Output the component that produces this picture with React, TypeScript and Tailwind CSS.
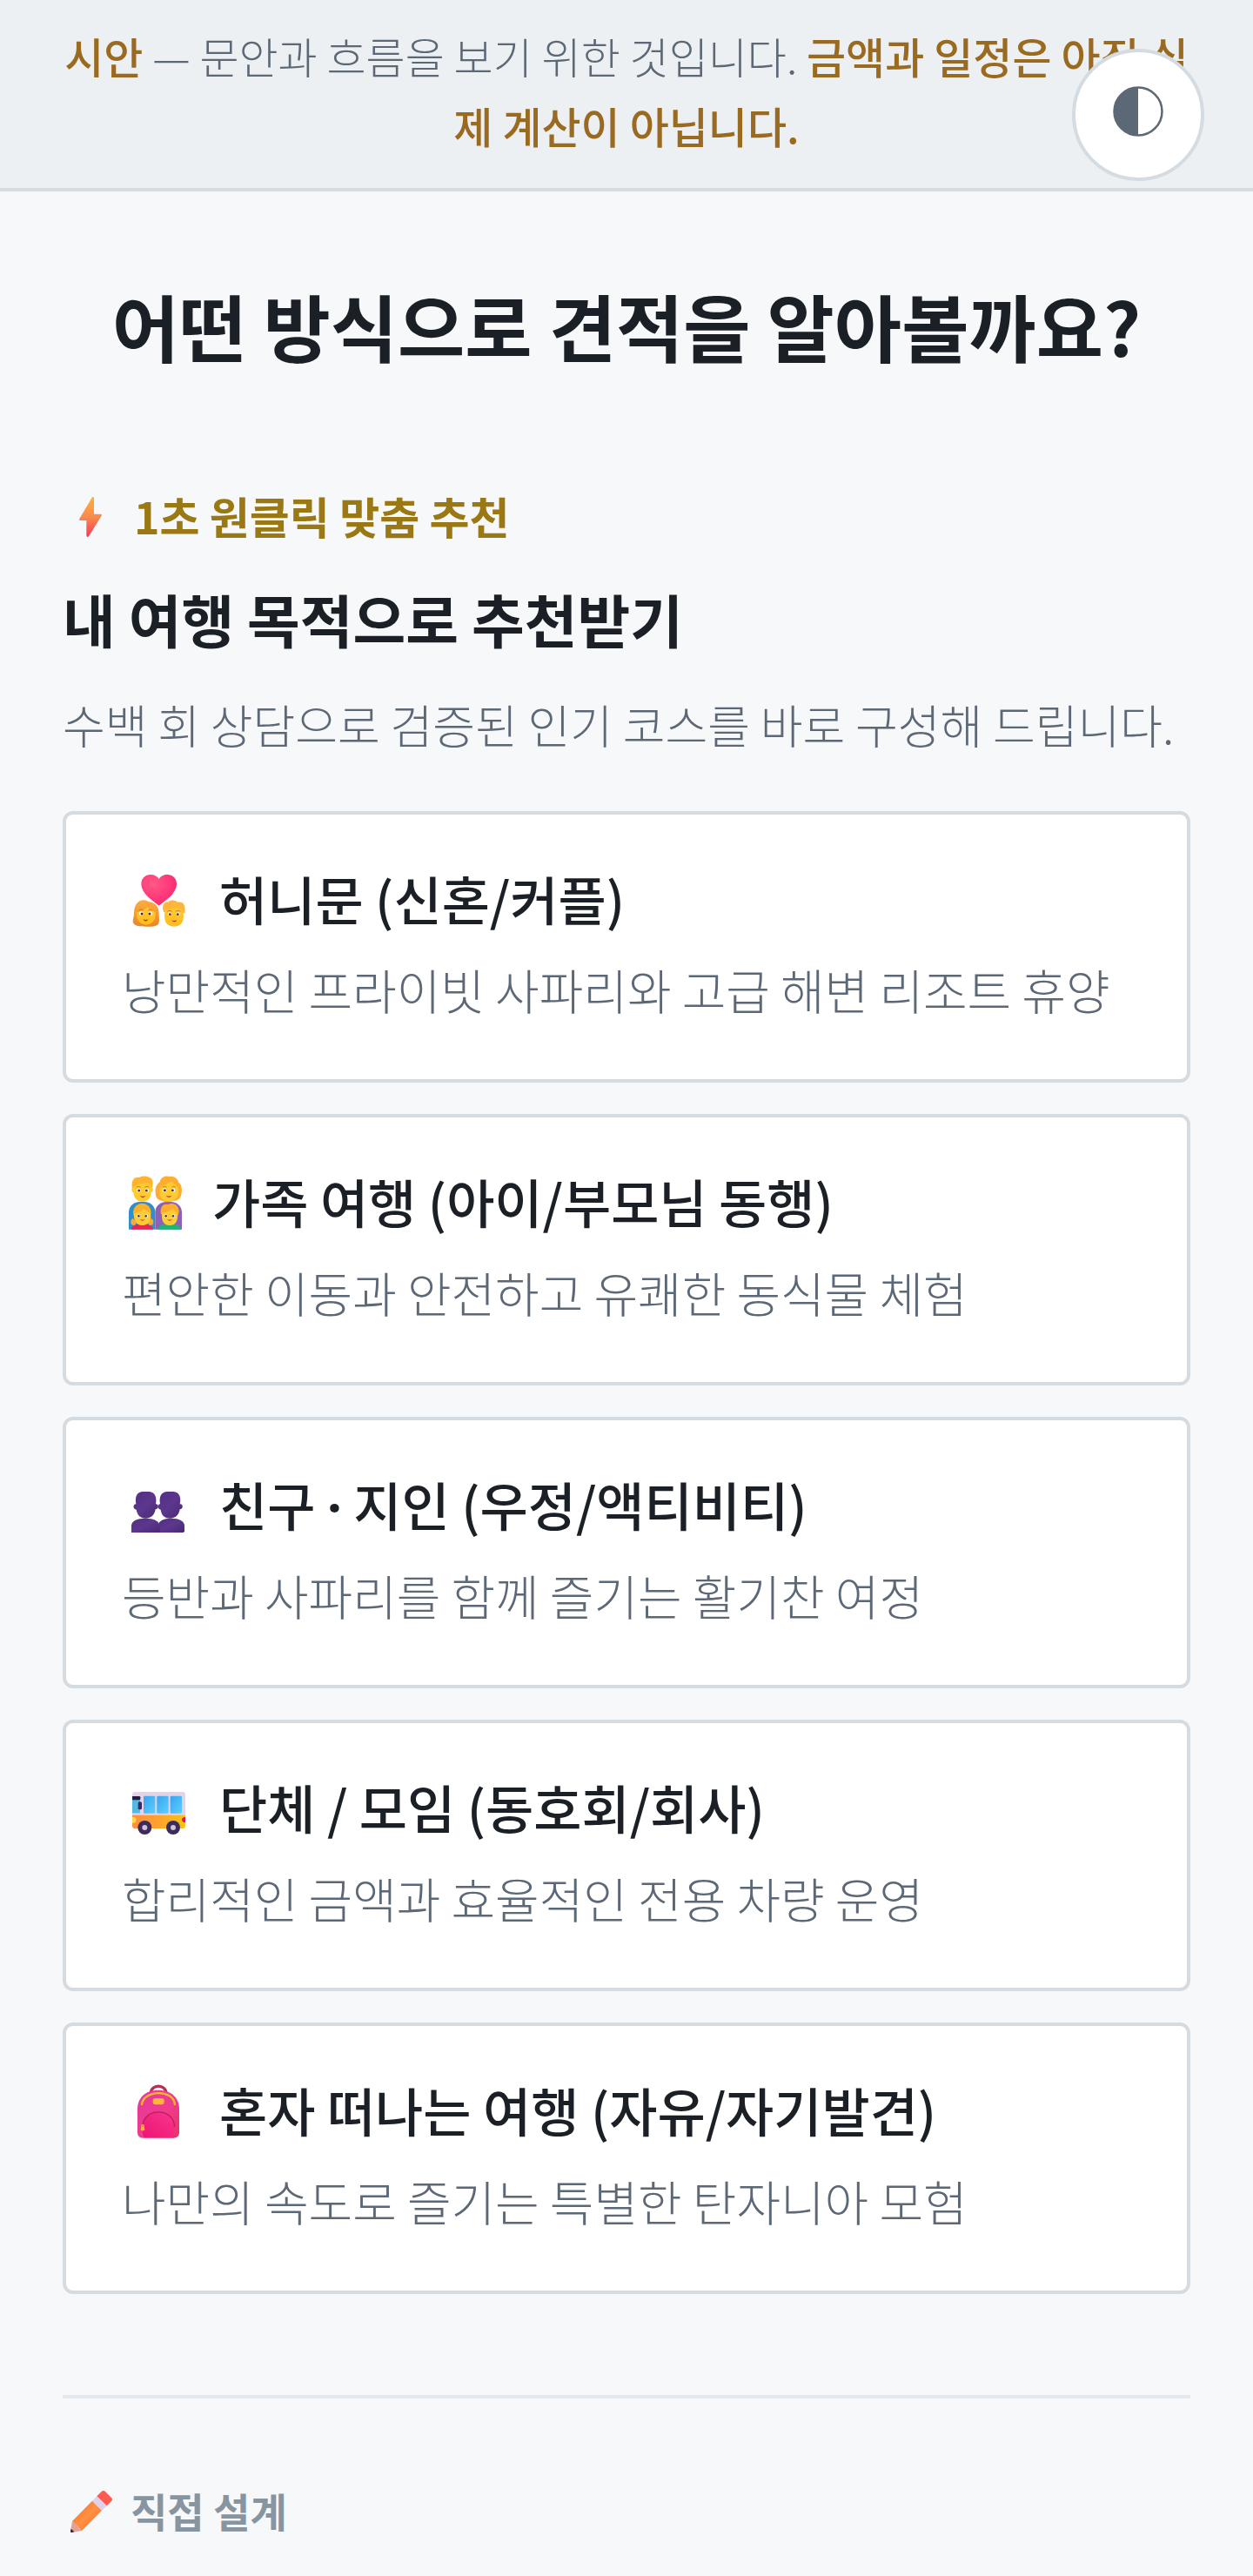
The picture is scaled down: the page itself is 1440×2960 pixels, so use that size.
import type { ReactNode } from "react";

function HoneymoonIcon() {
  return (
    <svg className="h-16 w-[84px] shrink-0" viewBox="30 66 252 192" aria-hidden="true">
      <defs>
        <radialGradient id="heart" cx="0.35" cy="0.3" r="0.8">
          <stop offset="0" stopColor="#ff5a84" />
          <stop offset="0.55" stopColor="#ff3a7c" />
          <stop offset="1" stopColor="#f52469" />
        </radialGradient>
        <linearGradient id="hairA" x1="0" y1="0" x2="0" y2="1">
          <stop offset="0" stopColor="#ffad3b" />
          <stop offset="1" stopColor="#e8862d" />
        </linearGradient>
        <linearGradient id="skin" x1="0" y1="0" x2="0" y2="1">
          <stop offset="0" stopColor="#ffc92f" />
          <stop offset="1" stopColor="#ffbb1c" />
        </linearGradient>
      </defs>
      <path d="M158 182C135 164 97 140 97 107C97 88 111 75 129 75C143 75 153 81 158 90C163 81 174 75 187 75C205 75 219 88 219 107C219 140 181 164 158 182Z" fill="url(#heart)" />
      <path d="M69 241C66 234 72 222 72 208C72 182 84 163 106 163C112 163 118 166 122 168C146 170 159 188 158 210C158 226 162 238 154 248C143 255 126 254 114 254C94 253 75 255 69 241Z" fill="url(#hairA)" />
      <path d="M80 205C96 204 110 196 118 187C125 196 138 199 146 205C148 232 135 248 114 248C93 248 80 231 80 205Z" fill="url(#skin)" />
      <path d="M174 204C166 178 177 169 190 169C199 160 216 164 223 170C240 166 252 179 247 208Z" fill="#ffb638" />
      <path d="M178 202C184 190 205 194 221 189C233 192 241 198 242 208C246 240 232 254 210 254C185 254 174 238 178 202Z" fill="url(#skin)" />
      <g fill="#fff">
        <circle cx="97" cy="209" r="7" />
        <circle cx="128" cy="209" r="7" />
        <circle cx="195" cy="211" r="6" />
        <circle cx="224" cy="211" r="6" />
      </g>
      <g fill="#4b2a32">
        <circle cx="99" cy="210" r="4.5" />
        <circle cx="126" cy="210" r="4.5" />
        <circle cx="196" cy="212" r="4" />
        <circle cx="223" cy="212" r="4" />
      </g>
      <g fill="none" stroke="#d9722b" strokeWidth="3" strokeLinecap="round">
        <path d="M90 197Q96 192 103 197M122 198Q129 193 135 198" />
        <path d="M188 201Q195 196 202 201M217 201Q224 196 231 201" />
      </g>
      <path d="M103 229Q112 233 121 229Q113 242 103 229ZM201 232Q211 236 220 231Q213 244 201 232Z" fill="#b5242d" />
    </svg>
  );
}

function FamilyIcon() {
  return (
    <svg className="h-16 w-[76px] shrink-0" viewBox="30 60 228 192" aria-hidden="true">
      <path d="M54 248V190C54 165 72 152 100 152C128 152 145 165 145 190V248Z" fill="#2f8fcd" />
      <path d="M145 248V190C145 165 163 152 191 152C219 152 237 165 237 190V248Z" fill="#8c62b8" />
      <path d="M66 108C60 78 75 65 90 69C103 62 121 64 131 72C140 80 137 100 133 112Z" fill="#ffb22d" />
      <path d="M70 102C80 91 101 90 113 86C124 88 131 92 132 103C140 104 138 119 131 120C130 142 119 152 101 152C82 152 72 141 70 121C63 119 62 105 70 102Z" fill="#ffca30" />
      <path d="M146 121C144 101 153 91 161 84C164 67 182 61 194 66C209 63 222 72 226 86C237 94 239 113 235 127C233 143 220 151 209 149C191 155 176 155 165 148C152 147 146 136 146 121Z" fill="#ffad30" />
      <path d="M159 111C168 94 186 91 202 83C212 92 223 97 225 112C226 137 213 151 192 151C171 151 158 137 159 111Z" fill="#ffcb33" />
      <path d="M62 248C63 236 79 228 101 228C122 228 138 237 138 248Z" fill="#e9274c" />
      <path d="M153 248C155 236 171 228 195 228C219 228 233 238 235 248Z" fill="#20b574" />
      <path d="M68 210Q56 218 64 232Q78 239 80 223ZM132 210Q144 218 136 232Q122 239 120 223Z" fill="#ffa834" />
      <circle cx="100" cy="189" r="31" fill="#ffb02b" />
      <path d="M72 192C85 191 98 184 106 177C113 184 122 187 129 193C134 219 120 234 101 234C81 234 69 217 72 192Z" fill="#ffcc36" />
      <path d="M165 196C160 169 174 157 189 162C203 154 222 161 225 176C229 187 226 195 222 202Z" fill="#ffad2b" />
      <path d="M169 191C184 189 198 184 207 177C211 184 219 187 222 194C225 220 213 234 195 234C177 234 164 219 169 191Z" fill="#ffcc36" />
      <g fill="#fff">
        <circle cx="88" cy="114" r="7" />
        <circle cx="116" cy="114" r="7" />
        <circle cx="177" cy="113" r="7" />
        <circle cx="207" cy="113" r="7" />
        <circle cx="87" cy="202" r="6" />
        <circle cx="114" cy="202" r="6" />
        <circle cx="181" cy="202" r="6" />
        <circle cx="208" cy="202" r="6" />
      </g>
      <g fill="#573524">
        <circle cx="89" cy="114" r="4.5" />
        <circle cx="115" cy="114" r="4.5" />
        <circle cx="178" cy="113" r="4.5" />
        <circle cx="205" cy="113" r="4.5" />
        <circle cx="88" cy="202" r="4" />
        <circle cx="113" cy="202" r="4" />
        <circle cx="182" cy="202" r="4" />
        <circle cx="207" cy="202" r="4" />
      </g>
      <g fill="none" stroke="#cf762a" strokeWidth="3" strokeLinecap="round">
        <path d="M81 102Q88 97 94 102M110 102Q117 97 123 102M171 102Q178 97 184 102M203 102Q209 97 215 102" />
      </g>
      <path d="M92 132Q102 136 112 132Q103 145 92 132ZM182 131Q192 136 202 131Q193 144 182 131ZM92 213Q101 217 110 213Q101 224 92 213ZM186 213Q195 217 204 213Q195 224 186 213Z" fill="#b82a2d" />
    </svg>
  );
}

function FriendsIcon() {
  return (
    <svg className="h-16 w-[84px] shrink-0" viewBox="30 54 252 192" aria-hidden="true">
      <defs>
        <linearGradient id="bust" x1="0" y1="0" x2="1" y2="1">
          <stop offset="0" stopColor="#533082" />
          <stop offset="0.5" stopColor="#5c378d" />
          <stop offset="1" stopColor="#482870" />
        </linearGradient>
      </defs>
      <g fill="url(#bust)">
        <path d="M155 243V218C157 202 174 194 200 194C228 194 246 204 246 219V238Q246 243 240 243Z" />
        <path d="M63 243V218C65 202 82 194 111 194C140 194 160 204 161 220V243Z" />
        <path d="M162 145C157 116 169 102 186 102H209C227 103 236 121 230 145C242 143 243 163 230 163C227 182 216 194 196 194C176 194 166 181 164 164C152 163 153 144 162 145Z" />
        <path d="M79 145C74 116 85 102 102 102H125C143 103 152 121 147 145C158 143 159 163 146 163C143 182 132 194 112 194C93 194 83 181 80 164C67 163 68 144 79 145Z" />
      </g>
    </svg>
  );
}

function BusIcon() {
  return (
    <svg className="h-16 w-[84px] shrink-0" viewBox="30 48 252 192" aria-hidden="true">
      <defs>
        <linearGradient id="busBody" x1="0" y1="0" x2="1" y2="0">
          <stop offset="0" stopColor="#ff8f40" />
          <stop offset="0.5" stopColor="#ffa22c" />
          <stop offset="1" stopColor="#f6c40e" />
        </linearGradient>
        <linearGradient id="glass" x1="0" y1="0" x2="1" y2="1">
          <stop offset="0" stopColor="#3aa3ee" />
          <stop offset="1" stopColor="#5bd0ff" />
        </linearGradient>
      </defs>
      <path d="M66 97Q66 87 76 87H239Q249 87 249 97V172H66Z" fill="#e2d3e6" />
      <path d="M66 167H249V203Q249 213 239 213H75Q66 213 66 204Z" fill="url(#busBody)" />
      <path d="M66 113H93V160H66Z" fill="#54b9e2" />
      <path d="M66 102H90Q94 102 94 106V111Q94 115 90 115H66Z" fill="#2a1a3e" />
      <rect x="86" y="121" width="13" height="27" rx="5" fill="#41275e" />
      <g fill="url(#glass)">
        <rect x="105" y="101" width="40" height="60" rx="4" />
        <rect x="151" y="101" width="40" height="60" rx="4" />
        <rect x="197" y="101" width="40" height="60" rx="4" />
      </g>
      <path d="M66 174Q79 173 79 181V187Q79 195 66 194Z" fill="#ffd945" />
      <path d="M249 174Q237 174 237 183T249 193Z" fill="#d51a63" />
      <circle cx="109" cy="210" r="24" fill="#3d2b5b" />
      <circle cx="207" cy="210" r="24" fill="#3d2b5b" />
      <circle cx="109" cy="210" r="9" fill="#cfc3d8" />
      <circle cx="207" cy="210" r="9" fill="#cfc3d8" />
    </svg>
  );
}

function BackpackIcon() {
  return (
    <svg className="h-16 w-[84px] shrink-0" viewBox="30 57 252 192" aria-hidden="true">
      <defs>
        <linearGradient id="pack" x1="0" y1="0" x2="1" y2="1">
          <stop offset="0" stopColor="#e5389f" />
          <stop offset="0.55" stopColor="#ee3c8c" />
          <stop offset="1" stopColor="#e93364" />
        </linearGradient>
        <linearGradient id="pocket" x1="1" y1="0" x2="0" y2="1">
          <stop offset="0" stopColor="#f9368f" />
          <stop offset="1" stopColor="#eb1572" />
        </linearGradient>
      </defs>
      <path d="M130 92C130 58 182 58 183 92" fill="none" stroke="#b82f54" strokeWidth="10" />
      <path d="M84 145C84 105 113 80 156 80C200 80 228 106 228 145V226Q228 245 208 245H103Q84 245 84 226Z" fill="url(#pack)" />
      <path d="M99 129C105 80 206 75 213 129" fill="none" stroke="#ffb631" strokeWidth="7" strokeLinecap="round" />
      <rect x="137" y="108" width="39" height="22" rx="9" fill="#ffb737" />
      <path d="M101 216C98 179 121 157 156 157C191 157 213 180 212 213L210 244H110Q101 243 101 216Z" fill="url(#pocket)" />
      <path d="M102 202C106 140 207 139 212 205" fill="none" stroke="#bb1c5e" strokeWidth="4" />
      <path d="M97 202Q97 197 102 197T107 202L109 216Q109 220 105 220H99Q95 220 95 216Z" fill="#ffae35" />
      <circle cx="102" cy="204" r="2.5" fill="#d96a28" />
    </svg>
  );
}

function BoltIcon() {
  return (
    <svg className="mt-2 h-[60px] w-[70px] shrink-0" viewBox="36 51 210 180" aria-hidden="true">
      <defs>
        <linearGradient id="bolt" x1="0" y1="0" x2="0" y2="1">
          <stop offset="0" stopColor="#ffb13c" />
          <stop offset="0.5" stopColor="#fa8a4c" />
          <stop offset="1" stopColor="#f6395c" />
        </linearGradient>
      </defs>
      <path d="M138 67Q144 64 144 70V125H168Q173 126 170 131L126 202Q119 207 118 199V147H96Q91 146 94 141Z" fill="url(#bolt)" />
    </svg>
  );
}

function PencilIcon() {
  return (
    <svg className="mt-2 h-[60px] w-[66px] shrink-0" viewBox="36 57 198 180" aria-hidden="true">
      <defs>
        <linearGradient id="pencil" x1="0" y1="0" x2="1" y2="1">
          <stop offset="0" stopColor="#ee6b39" />
          <stop offset="0.5" stopColor="#ff913f" />
          <stop offset="1" stopColor="#f26a3c" />
        </linearGradient>
      </defs>
      <path d="M69 174L102 207L66 213Q63 213 63 209Z" fill="#e2a396" />
      <path d="M65 200L76 211L66 213Q63 213 63 209Z" fill="#3f173f" />
      <path d="M69 174L138 104L171 137L102 207Z" fill="url(#pencil)" />
      <path d="M138 104L154 88L188 121L171 137Z" fill="#dcd2e9" />
      <path d="M154 88L170 72Q176 66 183 72L204 93Q210 99 204 105L188 121Z" fill="#ff5a50" />
    </svg>
  );
}

const purposes: { id: string; title: ReactNode; description: string; icon: ReactNode }[] = [
  {
    id: "honeymoon",
    title: "허니문 (신혼/커플)",
    description: "낭만적인 프라이빗 사파리와 고급 해변 리조트 휴양",
    icon: <HoneymoonIcon />,
  },
  {
    id: "family",
    title: "가족 여행 (아이/부모님 동행)",
    description: "편안한 이동과 안전하고 유쾌한 동식물 체험",
    icon: <FamilyIcon />,
  },
  {
    id: "friends",
    // the CJK middle dot is too wide here, so it comes from the Latin face
    title: (
      <>
        친구 <span className="font-['Noto_Sans',sans-serif] leading-none font-bold">·</span> 지인 (우정/액티비티)
      </>
    ),
    description: "등반과 사파리를 함께 즐기는 활기찬 여정",
    icon: <FriendsIcon />,
  },
  {
    id: "group",
    title: "단체 / 모임 (동호회/회사)",
    description: "합리적인 금액과 효율적인 전용 차량 운영",
    icon: <BusIcon />,
  },
  {
    id: "solo",
    title: "혼자 떠나는 여행 (자유/자기발견)",
    description: "나만의 속도로 즐기는 특별한 탄자니아 모험",
    icon: <BackpackIcon />,
  },
];

export default function App() {
  return (
    <div className="relative min-h-screen bg-[#f7f8fa] font-['Noto_Sans_CJK_KR',sans-serif] text-[#1b1f26]">
      <header className="border-b-4 border-[#d4dbe1] bg-[#edf0f3] px-16 pt-6 pb-8 text-center text-[49px] leading-[80px] font-light text-[#5c6875]">
        <p className="break-all">
          <strong className="font-medium text-[#9a6a20]">시안</strong> — 문안과 흐름을 보기 위한 것입니다.{" "}
          <strong className="font-medium text-[#9a6a20]">금액과 일정은 아직 실제 계산이 아닙니다.</strong>
        </p>
      </header>

      <button
        type="button"
        aria-label="화면 테마 바꾸기"
        className="absolute top-14 right-14 flex size-[152px] items-center justify-center rounded-full border-4 border-[#d4dbe1] bg-white pb-2"
      >
        <svg className="size-[58px]" viewBox="0 0 58 58" aria-hidden="true">
          <circle cx="29" cy="29" r="27.5" fill="#fff" stroke="#5c6875" strokeWidth="2.5" />
          <path d="M29 1A28 28 0 0 0 29 57Z" fill="#5c6875" />
        </svg>
      </button>

      <main className="px-[72px] pt-24 pb-8">
        <h1 className="text-center text-[84px] leading-[116px] font-bold">어떤 방식으로 견적을 알아볼까요?</h1>

        <section className="mt-30">
          <p className="flex items-center gap-3 text-[50px] leading-[80px] font-bold text-[#9a7814]">
            <BoltIcon />
            1초 원클릭 맞춤 추천
          </p>
          <h2 className="mt-7 text-[66px] leading-[100px] font-bold">내 여행 목적으로 추천받기</h2>
          <p className="mt-7 text-[53px] leading-[88px] font-light text-[#5c6875]">
            수백 회 상담으로 검증된 인기 코스를 바로 구성해 드립니다.
          </p>

          <div className="mt-14 flex flex-col gap-9">
            {purposes.map((purpose) => (
              <button
                key={purpose.id}
                type="button"
                className="rounded-xl border-4 border-[#d4dbe1] bg-white px-16 py-15 text-left"
              >
                <span className="flex items-center gap-7 text-[60px] leading-[72px] font-medium">
                  <span className="mt-1">{purpose.icon}</span>
                  <span>{purpose.title}</span>
                </span>
                <span className="mt-6 block text-[55px] leading-[88px] font-light text-[#5c6875]">
                  {purpose.description}
                </span>
              </button>
            ))}
          </div>
        </section>

        <section className="mt-29 border-t-4 border-[#e2e8ed] pt-22">
          <p className="flex items-center gap-3 text-[46px] leading-[80px] font-bold text-[#8795a1]">
            <PencilIcon />
            직접 설계
          </p>
        </section>
      </main>
    </div>
  );
}
